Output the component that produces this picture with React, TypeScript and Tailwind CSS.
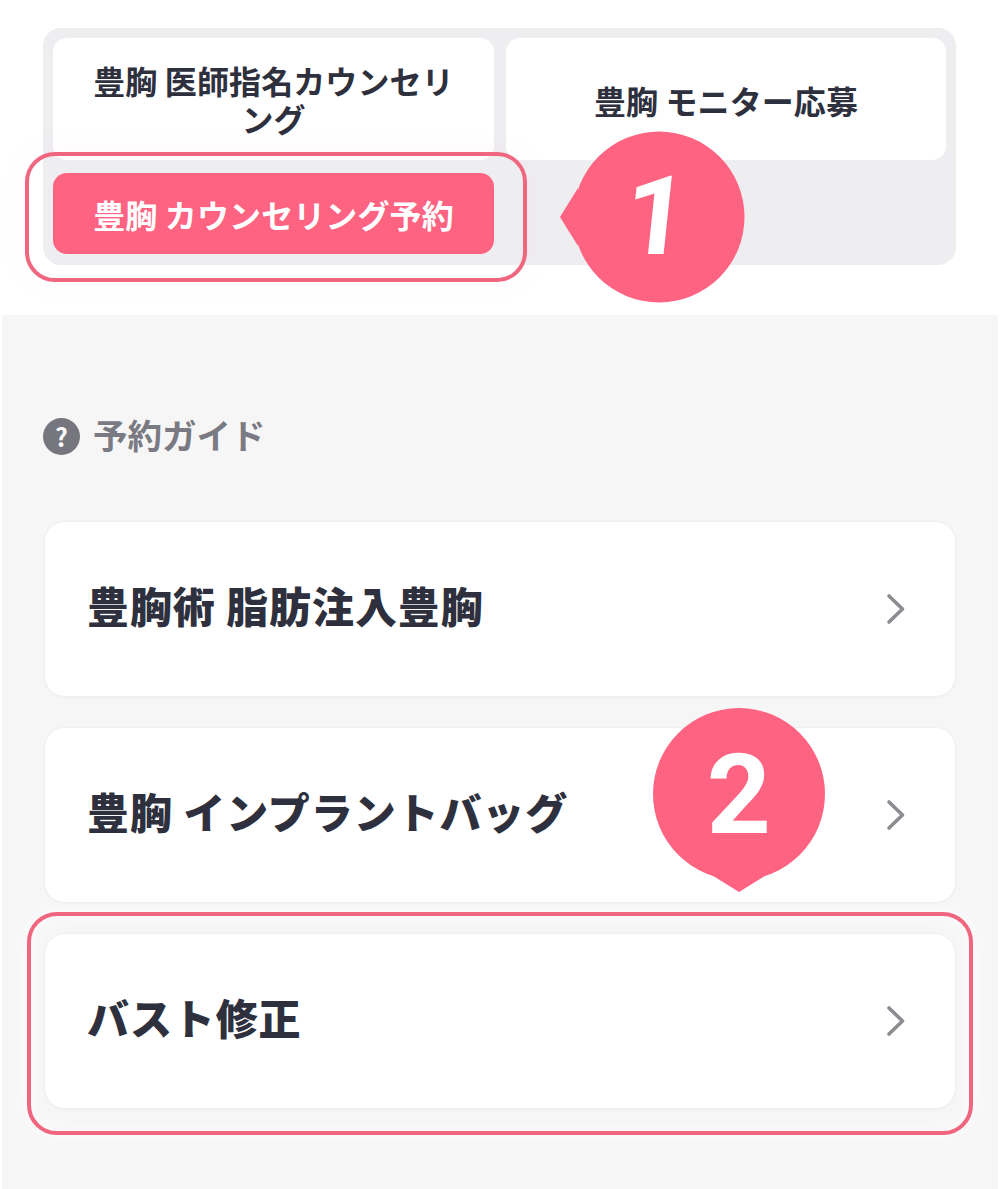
import React from "react";

const jp = "font-['Noto_Sans_CJK_JP','Noto_Sans',sans-serif]";

function Chevron() {
  return (
    <svg width="20" height="32" viewBox="0 0 20 32" fill="none" className="shrink-0">
      <path d="M3 3 L16.5 16 L3 29" stroke="#8b8c8f" strokeWidth="3.6" strokeLinecap="round" strokeLinejoin="round" />
    </svg>
  );
}

function GuideCard({ label }: { label: string }) {
  return (
    <div className="h-[176px] rounded-[21px] bg-white border border-[#efeff0] shadow-[0_1px_3px_rgba(0,0,0,0.03)] flex items-center justify-between pl-[42px] pr-[49px]">
      <span className="text-[42px] leading-none font-black text-[#2e303e] tracking-[0.9px] pb-[8px]">{label}</span>
      <Chevron />
    </div>
  );
}

export default function App() {
  return (
    <div className={`relative w-[1000px] h-[1189px] bg-white overflow-hidden ${jp}`}>
      <div className="h-[315px] pt-[28px] px-[43px]">
        <div className="w-[913px] rounded-[18px] bg-[#eeeef1] pt-[10px] px-[10px] pb-[11px] grid grid-cols-[441px_440px] gap-x-[12px] gap-y-[13px]">
          <div className="h-[122px] rounded-[14px] bg-white flex items-center justify-center px-[40px] text-center text-[32px] leading-[38px] font-bold text-[#2e303e] tracking-[0.1px]">
            豊胸 医師指名カウンセリング
          </div>
          <div className="h-[122px] rounded-[14px] bg-white flex items-center justify-center pt-[1px] text-[32px] leading-[38px] font-bold text-[#2e303e] tracking-[0.1px]">
            豊胸 モニター応募
          </div>
          <div className="h-[81px] rounded-[14px] bg-[#fe6381] flex items-center justify-center pt-[1px] text-[32px] leading-[38px] font-bold text-white tracking-[0.1px]">
            豊胸 カウンセリング予約
          </div>
        </div>
      </div>

      <div className="mx-[2px] h-[874px] bg-[#f6f6f7] px-[42px] pt-[102px]">
        <div className="flex items-center gap-[13px] h-[38px] -ml-[1px]">
          <div className="w-[37px] h-[37px] rounded-full bg-[#76767e] flex items-center justify-center text-white text-[25px] leading-none font-bold">
            ?
          </div>
          <span className="text-[34.5px] leading-none font-bold text-[#7a7a82] pb-[3px]">予約ガイド</span>
        </div>
        <div className="mt-[66px] flex flex-col gap-[30px]">
          <GuideCard label="豊胸術 脂肪注入豊胸" />
          <GuideCard label="豊胸 インプラントバッグ" />
          <GuideCard label="バスト修正" />
        </div>
      </div>

      {/* annotation rings */}
      <div className="absolute left-[25px] top-[152px] w-[502px] h-[130px] rounded-[30px] border-[4px] border-[#f1667f] shadow-[0_0_30px_rgba(255,120,150,0.05)]" />
      <div className="absolute left-[27px] top-[912px] w-[946px] h-[223px] rounded-[30px] border-[4px] border-[#f1667f] shadow-[0_0_24px_rgba(255,255,255,0.8),inset_0_0_20px_rgba(255,255,255,0.7)]" />

      {/* badge 1 */}
      <div className="absolute left-[558px] top-[130px] w-[188px] h-[174px]">
        <svg width="188" height="174" viewBox="0 0 188 174" className="absolute inset-0">
          <circle cx="101" cy="87" r="85.5" fill="#fe6381" />
          <path d="M2 87 L20 58 L20 116 Z" fill="#fe6381" />
        </svg>
        <span className="absolute left-[13px] w-[170px] top-0 h-[174px] flex items-center justify-center font-['Roboto',sans-serif] font-bold text-white text-[110px] leading-none -skew-x-6">
          1
        </span>
      </div>

      {/* badge 2 */}
      <div className="absolute left-[652px] top-[707px] w-[174px] h-[186px]">
        <svg width="174" height="186" viewBox="0 0 174 186" className="absolute inset-0">
          <circle cx="87" cy="87" r="86" fill="#fe6381" />
          <path d="M87 185 L58 167 L116 167 Z" fill="#fe6381" />
        </svg>
        <span className="absolute left-0 w-[174px] top-[1px] h-[174px] flex items-center justify-center font-['Roboto',sans-serif] font-bold text-white text-[112px] leading-none">
          2
        </span>
      </div>
    </div>
  );
}
